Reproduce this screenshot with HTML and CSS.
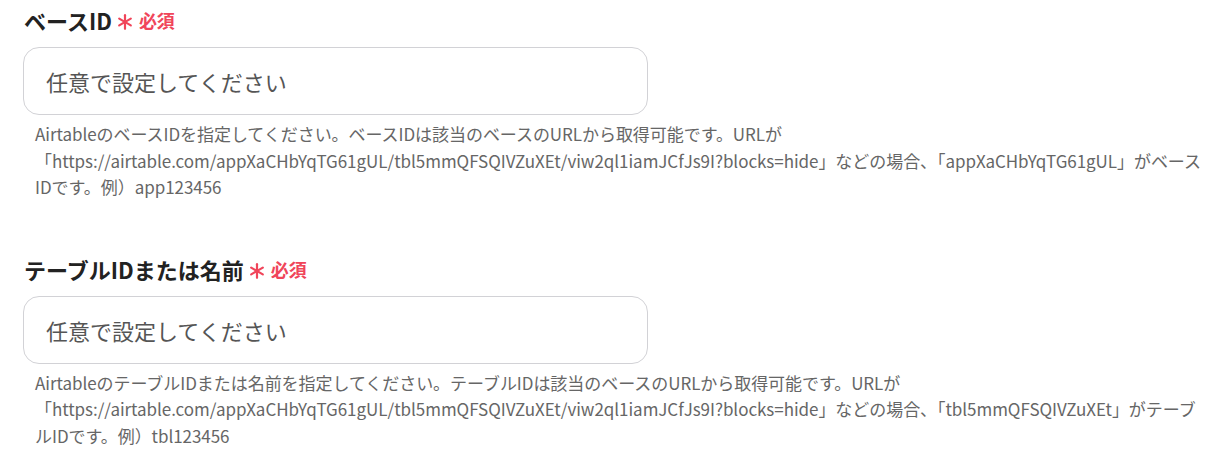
FILE: index.html
```html
<!DOCTYPE html>
<html lang="ja">
<head>
<meta charset="utf-8">
<link rel="stylesheet" href="styles.css">
</head>
<body>
<div class="form">
  <div class="field">
    <div class="label">ベースID<span class="req"><svg class="ast" viewBox="0 0 16 16" width="16" height="16"><g stroke="#f0455a" stroke-width="2.2" stroke-linecap="round"><line x1="8" y1="1.2" x2="8" y2="14.8"/><line x1="2.2" y1="4.6" x2="13.8" y2="11.4"/><line x1="2.2" y1="11.4" x2="13.8" y2="4.6"/></g></svg>必須</span></div>
    <div class="input">任意で設定してください</div>
    <div class="help">
      <span class="line">AirtableのベースIDを指定してください。ベースIDは該当のベースのURLから取得可能です。URLが</span>
      <span class="line">「https://airtable.com/appXaCHbYqTG61gUL/tbl5mmQFSQIVZuXEt/viw2ql1iamJCfJs9I?blocks=hide」などの場合、「appXaCHbYqTG61gUL」がベース</span>
      <span class="line">IDです。例）app123456</span>
    </div>
  </div>
  <div class="field">
    <div class="label">テーブルIDまたは名前<span class="req"><svg class="ast" viewBox="0 0 16 16" width="16" height="16"><g stroke="#f0455a" stroke-width="2.2" stroke-linecap="round"><line x1="8" y1="1.2" x2="8" y2="14.8"/><line x1="2.2" y1="4.6" x2="13.8" y2="11.4"/><line x1="2.2" y1="11.4" x2="13.8" y2="4.6"/></g></svg>必須</span></div>
    <div class="input">任意で設定してください</div>
    <div class="help">
      <span class="line">AirtableのテーブルIDまたは名前を指定してください。テーブルIDは該当のベースのURLから取得可能です。URLが</span>
      <span class="line">「https://airtable.com/appXaCHbYqTG61gUL/tbl5mmQFSQIVZuXEt/viw2ql1iamJCfJs9I?blocks=hide」などの場合、「tbl5mmQFSQIVZuXEt」がテーブ</span>
      <span class="line">ルIDです。例）tbl123456</span>
    </div>
  </div>
</div>
</body>
</html>
```
FILE: styles.css
```css
html, body {
  margin: 0;
  padding: 0;
  background: #ffffff;
}
body {
  font-family: "Noto Sans CJK JP", "Noto Sans", sans-serif;
  color: #222222;
}
.form {
  padding: 7px 0 0 23px;
  display: flex;
  flex-direction: column;
  gap: 55px;
}
.field {
  display: flex;
  flex-direction: column;
}
.label {
  font-size: 22px;
  font-weight: 700;
  line-height: 26px;
  height: 26px;
  padding-left: 1px;
  display: flex;
  align-items: center;
  letter-spacing: 0;
  color: #222222;
}
.req {
  color: #f0455a;
  font-size: 18px;
  font-weight: 700;
  margin-left: 5px;
  display: flex;
  align-items: center;
  letter-spacing: 0;
}
.ast {
  display: block;
  margin-right: 6px;
  margin-top: 4px;
}
.input {
  margin-top: 14px;
  border: 1px solid #d2d2d6;
  border-radius: 16px;
  display: flex;
  align-items: center;
  padding-left: 22px;
  box-sizing: border-box;
  height: 68px;
  width: 625px;
  font-size: 22px;
  color: #555555;
}
.help {
  margin-top: 6px;
  padding-left: 12px;
  font-size: 17px;
  color: #666666;
  display: flex;
  flex-direction: column;
}
.line {
  display: block;
  height: 26.5px;
  line-height: 26.5px;
  white-space: nowrap;
  letter-spacing: -0.05px;
}
```
